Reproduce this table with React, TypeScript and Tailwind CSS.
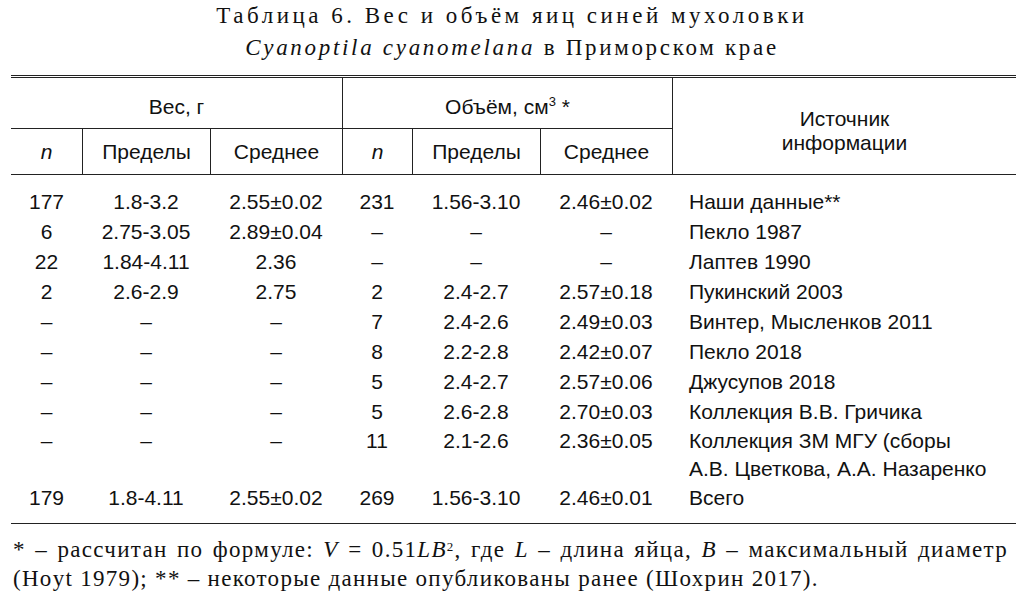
type Row = { cells: string[]; source: React.ReactNode; tall?: boolean }

const rows: Row[] = [
  { cells: ['177', '1.8-3.2', '2.55±0.02', '231', '1.56-3.10', '2.46±0.02'], source: 'Наши данные**' },
  { cells: ['6', '2.75-3.05', '2.89±0.04', '–', '–', '–'], source: 'Пекло 1987' },
  { cells: ['22', '1.84-4.11', '2.36', '–', '–', '–'], source: 'Лаптев 1990' },
  { cells: ['2', '2.6-2.9', '2.75', '2', '2.4-2.7', '2.57±0.18'], source: 'Пукинский 2003' },
  { cells: ['–', '–', '–', '7', '2.4-2.6', '2.49±0.03'], source: 'Винтер, Мысленков 2011' },
  { cells: ['–', '–', '–', '8', '2.2-2.8', '2.42±0.07'], source: 'Пекло 2018' },
  { cells: ['–', '–', '–', '5', '2.4-2.7', '2.57±0.06'], source: 'Джусупов 2018' },
  { cells: ['–', '–', '–', '5', '2.6-2.8', '2.70±0.03'], source: 'Коллекция В.В. Гричика' },
  {
    cells: ['–', '–', '–', '11', '2.1-2.6', '2.36±0.05'],
    source: (
      <>
        Коллекция ЗМ МГУ (сборы
        <br />
        А.В. Цветкова, А.А. Назаренко
      </>
    ),
    tall: true,
  },
  { cells: ['179', '1.8-4.11', '2.55±0.02', '269', '1.56-3.10', '2.46±0.01'], source: 'Всего' },
]

const cols = 'grid grid-cols-[71px_128px_132px_70px_128px_132px_344px]'

export default function App() {
  return (
    <div className="w-[1024px] h-[594px] bg-white text-[#111] overflow-hidden">
      <div className="text-center font-[family-name:Liberation_Serif,serif] text-[23px] leading-[32px]">
        <div className="tracking-[3.5px]">Таблица 6. Вес и объём яиц синей мухоловки</div>
        <div className="tracking-[2.7px]">
          <i>Cyanoptila cyanomelana</i> в Приморском крае
        </div>
      </div>

      <div className="mx-[11px] mt-[11px] w-[1005px] font-[family-name:Liberation_Sans,Arial,sans-serif]">
        <div className="border-t-[3px] border-double border-[#222] border-b border-b-[#222]">
          <div className={cols}>
            <div className="col-span-3 h-[51px] border-b border-[#222] flex items-center justify-center text-[21px] pt-[8px]">
              Вес, г
            </div>
            <div className="col-span-3 h-[51px] border-b border-l border-[#222] flex items-center justify-center text-[21px] pt-[8px]">
              <span>
                Объём, см<sup className="text-[13px] relative -top-[8px]">3</sup> *
              </span>
            </div>
            <div className="row-span-2 border-l border-[#222] flex items-center justify-center text-center text-[21px] leading-[24px] pt-[10px]">
              Источник
              <br />
              информации
            </div>
            <div className="h-[45px] flex items-center justify-center text-[21px] italic">n</div>
            <div className="h-[45px] border-l border-[#222] flex items-center justify-center text-[21px]">Пределы</div>
            <div className="h-[45px] border-l border-[#222] flex items-center justify-center text-[21px]">Среднее</div>
            <div className="h-[45px] border-l border-[#222] flex items-center justify-center text-[21px] italic">n</div>
            <div className="h-[45px] border-l border-[#222] flex items-center justify-center text-[21px]">Пределы</div>
            <div className="h-[45px] border-l border-[#222] flex items-center justify-center text-[21px]">Среднее</div>
          </div>
        </div>

        <div className="pt-[12px] pb-[10px] border-b border-[#222]">
          {rows.map((r, i) => (
            <div key={i} className={`${cols} text-[21px] ${r.tall ? 'leading-[28px] h-[56px]' : 'leading-[30px] h-[30px]'}`}>
              {r.cells.map((c, j) => (
                <div key={j} className="text-center">
                  {c}
                </div>
              ))}
              <div className="pl-[17px] whitespace-nowrap">{r.source}</div>
            </div>
          ))}
        </div>

        <div className="w-[997px] font-[family-name:Liberation_Serif,serif] text-[23px] leading-[29px] pt-[11px] pl-[2px] whitespace-nowrap tracking-[1.3px]">
          <div className="[text-align-last:justify]">
            * – рассчитан по формуле: <i>V</i> = 0.51<i>LB</i>
            <sup className="text-[13px]">2</sup>, где <i>L</i> – длина яйца, <i>B</i> – максимальный диаметр
          </div>
          <div>(Hoyt 1979); ** – некоторые данные опубликованы ранее (Шохрин 2017).</div>
        </div>
      </div>
    </div>
  )
}
